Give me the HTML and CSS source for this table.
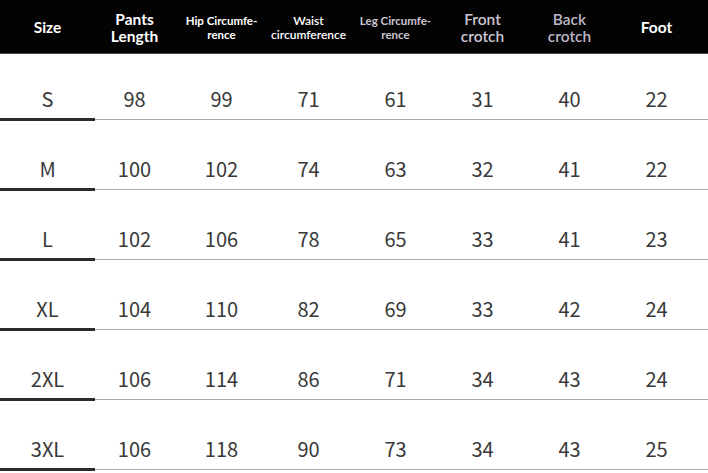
FILE: index.html
```html
<!DOCTYPE html>
<html lang="en">
<head>
<meta charset="utf-8">
<title>Size Chart</title>
<link rel="stylesheet" href="styles.css">
</head>
<body>
<div class="chart">
  <div class="head">
    <div class="hc big bold white">Size</div>
    <div class="hc big bold white">Pants<br>Length</div>
    <div class="hc small bold white">Hip Circumfe-<br>rence</div>
    <div class="hc small semi white wide">Waist<br>circumference</div>
    <div class="hc small bold lav">Leg Circumfe-<br>rence</div>
    <div class="hc big mid lav">Front<br>crotch</div>
    <div class="hc big mid lav2">Back<br>crotch</div>
    <div class="hc big bold white">Foot</div>
  </div>

  <div class="row first">
    <div class="cell">S</div><div class="cell">98</div><div class="cell">99</div><div class="cell">71</div><div class="cell">61</div><div class="cell">31</div><div class="cell">40</div><div class="cell">22</div>
  </div>
  <div class="rule"><span class="thick"></span><span class="thin"></span></div>

  <div class="row">
    <div class="cell">M</div><div class="cell">100</div><div class="cell">102</div><div class="cell">74</div><div class="cell">63</div><div class="cell">32</div><div class="cell">41</div><div class="cell">22</div>
  </div>
  <div class="rule"><span class="thick"></span><span class="thin"></span></div>

  <div class="row">
    <div class="cell">L</div><div class="cell">102</div><div class="cell">106</div><div class="cell">78</div><div class="cell">65</div><div class="cell">33</div><div class="cell">41</div><div class="cell">23</div>
  </div>
  <div class="rule"><span class="thick"></span><span class="thin"></span></div>

  <div class="row">
    <div class="cell">XL</div><div class="cell">104</div><div class="cell">110</div><div class="cell">82</div><div class="cell">69</div><div class="cell">33</div><div class="cell">42</div><div class="cell">24</div>
  </div>
  <div class="rule"><span class="thick"></span><span class="thin"></span></div>

  <div class="row">
    <div class="cell">2XL</div><div class="cell">106</div><div class="cell">114</div><div class="cell">86</div><div class="cell">71</div><div class="cell">34</div><div class="cell">43</div><div class="cell">24</div>
  </div>
  <div class="rule"><span class="thick"></span><span class="thin"></span></div>

  <div class="row">
    <div class="cell">3XL</div><div class="cell">106</div><div class="cell">118</div><div class="cell">90</div><div class="cell">73</div><div class="cell">34</div><div class="cell">43</div><div class="cell">25</div>
  </div>
  <div class="rule"><span class="thick"></span><span class="thin"></span></div>
</div>
</body>
</html>
```

FILE: styles.css
```css
html, body {
  margin: 0;
  padding: 0;
  background: #ffffff;
}

.chart {
  width: 708px;
  height: 473px;
  overflow: hidden;
  background: #ffffff;
}

.head {
  height: 54px;
  box-sizing: border-box;
  background: #030303;
  border-bottom: 1px solid #4a4a4a;
  display: grid;
  grid-template-columns: repeat(8, 87px);
  padding-left: 4px;
  align-items: center;
  font-family: "Lato", "Open Sans", sans-serif;
}

.hc {
  text-align: center;
  white-space: nowrap;
}

.hc.big {
  font-size: 15.5px;
  line-height: 17px;
  padding-top: 2px;
}

.hc.small {
  font-size: 11.5px;
  line-height: 14px;
  padding-top: 3px;
}

.hc.wide {
  font-size: 12px;
}

.bold { font-weight: 700; }
.semi { font-weight: 600; }
.mid { font-weight: 600; }

.white { color: #ffffff; }
.lav { color: #cac6d2; }
.lav2 { color: #bbb7c4; }

.row {
  display: grid;
  grid-template-columns: repeat(8, 87px);
  padding-left: 4px;
  height: 67px;
  align-items: end;
  font-family: "Noto Sans CJK SC", "Noto Sans", sans-serif;
  font-size: 20px;
  color: #393939;
}

.row.first {
  height: 64px;
}

.cell {
  text-align: center;
  line-height: 24px;
  padding-bottom: 7px;
}

.rule {
  display: flex;
  align-items: center;
  height: 3px;
}

.thick {
  width: 95px;
  height: 3px;
  background: #2b2b2b;
}

.thin {
  flex: 1;
  height: 1px;
  background: #a9a9a9;
}
```
